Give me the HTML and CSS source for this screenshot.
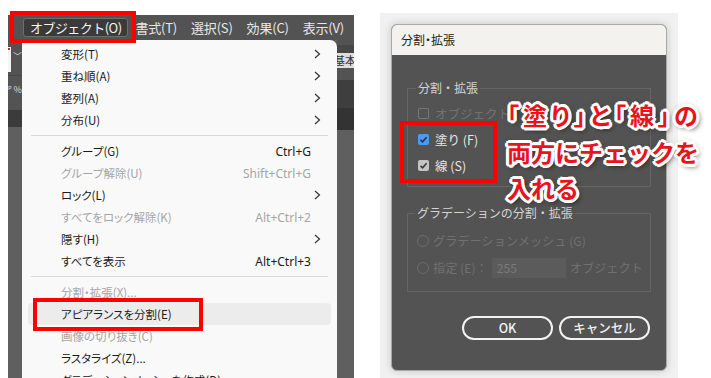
FILE: index.html
```html
<!DOCTYPE html>
<html lang="ja">
<head>
<meta charset="utf-8">
<title>分割・拡張</title>
<link rel="stylesheet" href="styles.css">
</head>
<body>
<div class="page">
  <div class="shot">
    <div class="menubar">
      <div class="mb-item active">オブジェクト(O)</div>
      <div class="mb-item">書式(T)</div>
      <div class="mb-item">選択(S)</div>
      <div class="mb-item">効果(C)</div>
      <div class="mb-item">表示(V)</div>
    </div>
    <div class="below">
      <div class="lstrip">
        <div class="ls-a"></div>
        <div class="ls-b"><span class="ls-white"><i class="ls-dot"></i></span><span class="ls-chev">﹀</span></div>
        <div class="ls-c">ᴾ %</div>
        <div class="ls-d"></div>
        <div class="ls-e"></div>
      </div>
      <div class="menu">
        <div class="row"><span>変形(T)</span><span class="key"></span><svg class="arr" viewBox="0 0 10 10"><path d="M4 1 L8.5 5 L4 9"/></svg></div>
        <div class="row"><span>重ね順(A)</span><span class="key"></span><svg class="arr" viewBox="0 0 10 10"><path d="M4 1 L8.5 5 L4 9"/></svg></div>
        <div class="row"><span>整列(A)</span><span class="key"></span><svg class="arr" viewBox="0 0 10 10"><path d="M4 1 L8.5 5 L4 9"/></svg></div>
        <div class="row"><span>分布(U)</span><span class="key"></span><svg class="arr" viewBox="0 0 10 10"><path d="M4 1 L8.5 5 L4 9"/></svg></div>
        <div class="sep"></div>
        <div class="row"><span>グループ(G)</span><span class="key">Ctrl+G</span><span></span></div>
        <div class="row dis"><span>グループ解除(U)</span><span class="key">Shift+Ctrl+G</span><span></span></div>
        <div class="row"><span>ロック(L)</span><span class="key"></span><svg class="arr" viewBox="0 0 10 10"><path d="M4 1 L8.5 5 L4 9"/></svg></div>
        <div class="row dis"><span>すべてをロック解除(K)</span><span class="key">Alt+Ctrl+2</span><span></span></div>
        <div class="row"><span>隠す(H)</span><span class="key"></span><svg class="arr" viewBox="0 0 10 10"><path d="M4 1 L8.5 5 L4 9"/></svg></div>
        <div class="row"><span>すべてを表示</span><span class="key">Alt+Ctrl+3</span><span></span></div>
        <div class="sep"></div>
        <div class="row dis"><span>分割・拡張(X)...</span><span class="key"></span><span></span></div>
        <div class="row hl"><span>アピアランスを分割(E)</span><span class="key"></span><span></span></div>
        <div class="row dis"><span>画像の切り抜き(C)</span><span class="key"></span><span></span></div>
        <div class="row"><span>ラスタライズ(Z)...</span><span class="key"></span><span></span></div>
        <div class="row"><span>グラデーションメッシュを作成(D)...</span><span class="key"></span><span></span></div>
      </div>
      <div class="rstrip">
        <div class="rs-a"></div>
        <div class="rs-b"></div>
        <div class="rs-c"><span>基本</span></div>
        <div class="rs-d"></div>
        <div class="rs-e"></div>
        <div class="rs-f"></div>
        <div class="rs-g"></div>
      </div>
    </div>
  </div>

  <div class="dlg-wrap">
    <div class="dlg">
      <div class="dlg-title">分割・拡張</div>
      <div class="dlg-body">
        <fieldset class="grp g1">
          <legend>分割・拡張</legend>
          <div class="opt dis"><span class="cb cb-off"></span><span>オブジェクト</span></div>
          <div class="opt"><svg class="cb" viewBox="0 0 11 11"><rect x="0" y="0" width="11" height="11" rx="2" fill="#4a9bef"/><path d="M2.5 5.8 L4.6 7.8 L8.6 3.2" fill="none" stroke="#2c3440" stroke-width="1.6"/></svg><span>塗り (F)</span></div>
          <div class="opt"><svg class="cb" viewBox="0 0 11 11"><rect x="0" y="0" width="11" height="11" rx="2" fill="#c4c4c4"/><path d="M2.5 5.8 L4.6 7.8 L8.6 3.2" fill="none" stroke="#3a3a3a" stroke-width="1.6"/></svg><span>線 (S)</span></div>
        </fieldset>
        <fieldset class="grp g2">
          <legend>グラデーションの分割・拡張</legend>
          <div class="opt2 dis"><span class="radio"></span><span>グラデーションメッシュ (G)</span></div>
          <div class="opt2 dis"><span class="radio"></span><span>指定 (E)：</span><span class="inp">255</span><span>オブジェクト</span></div>
        </fieldset>
        <div class="btns">
          <div class="btn">OK</div>
          <div class="btn">キャンセル</div>
        </div>
      </div>
    </div>
  </div>

  <div class="rbox rb1"></div>
  <div class="rbox rb2"></div>
  <div class="rbox rb3"></div>

  <div class="note">
    <div class="l1">「塗り」と「線」の</div>
    <div>両方にチェックを</div>
    <div>入れる</div>
  </div>
</div>
</body>
</html>
```

FILE: styles.css
```css
* { box-sizing: border-box; }
body {
  margin: 0;
  background: #fff;
  font-family: "Noto Sans CJK JP", "Noto Sans", sans-serif;
}
.page {
  position: relative;
  width: 711px;
  height: 378px;
  display: flex;
  align-items: flex-start;
  overflow: hidden;
}

/* left screenshot */
.shot {
  margin: 15px 0 0 8px;
  width: 346px;
  height: 363px;
  display: flex;
  flex-direction: column;
  background: #5f5f5f;
}
.menubar {
  height: 25px;
  flex: none;
  background: #535353;
  display: flex;
  align-items: center;
  padding-left: 15px;
}
.mb-item {
  font-size: 13px;
  line-height: 18px;
  height: 18px;
  color: #e8e8e8;
  padding: 0 7px;
  white-space: nowrap;
  letter-spacing: -0.2px;
}
.mb-item.active {
  background: #3a3a3a;
  border: 1px solid #6e6e6e;
  border-radius: 3px;
  padding: 0 6px;
  height: 19px;
  line-height: 17px;
  color: #f4f4f4;
  letter-spacing: -0.55px;
}
.below {
  flex: 1;
  display: flex;
  min-height: 0;
}
.lstrip {
  width: 14px;
  display: flex;
  flex-direction: column;
  overflow: hidden;
}
.ls-a { height: 5px; background: #535353; }
.ls-b {
  height: 30px;
  background: #535353;
  display: flex;
  align-items: flex-start;
}
.ls-white {
  position: relative;
  width: 4px;
  height: 25px;
  margin-top: 2px;
  background: #f4f4f4;
}
.ls-dot {
  position: absolute;
  left: 0;
  top: 1px;
  width: 2px;
  height: 2px;
  background: #e02020;
}
.ls-chev {
  font-size: 9px;
  color: #ddd;
  margin: 7px 0 0 2px;
  line-height: 10px;
}
.ls-c {
  height: 35px;
  background: #535353;
  border-top: 1px solid #474747;
  font-size: 9px;
  color: #ddd;
  line-height: 28px;
  white-space: nowrap;
}
.ls-d { height: 17px; background: #3b3b3b; }
.ls-e { flex: 1; background: #5f5f5f; }

.menu {
  width: 315px;
  background: #f9f9f9;
  border-radius: 0 7px 0 0;
  padding-top: 3px;
  overflow: hidden;
}
.row {
  display: grid;
  grid-template-columns: 1fr auto 10px;
  align-items: center;
  height: 22px;
  margin: 0 6px;
  padding: 0 10px 0 33px;
  font-size: 11.5px;
  color: #1b1b1b;
  border-radius: 4px;
  white-space: nowrap;
  font-feature-settings: "palt";
}
.row.dis { color: #a5a5a5; }
.row.hl { background: #ececec; }
.key {
  font-size: 12px;
  text-align: right;
  font-family: "Noto Sans", sans-serif;
}
.arr { width: 10px; height: 10px; }
.arr path { fill: none; stroke: #333; stroke-width: 1.2; }
.sep {
  height: 1px;
  background: #d9d9d9;
  margin: 4px 9px;
}

.rstrip {
  width: 17px;
  display: flex;
  flex-direction: column;
  overflow: hidden;
}
.rs-a { height: 5px; background: #535353; }
.rs-b { height: 8px; background: #474747; }
.rs-c {
  height: 15px;
  background: #dedede;
  font-size: 11px;
  line-height: 15px;
  color: #333;
  white-space: nowrap;
  overflow: hidden;
}
.rs-c span { margin-left: -3px; }
.rs-d { height: 12px; background: #535353; }
.rs-e { height: 28px; background: #3e3e3e; }
.rs-f { height: 22px; background: #333; }
.rs-g { flex: 1; background: #5f5f5f; }

/* dialog */
.dlg-wrap {
  margin: 13px 0 0 26px;
  width: 298px;
  height: 365px;
  background: #f1f1f1;
  padding: 11px 11px 0;
}
.dlg {
  width: 276px;
  height: 347px;
  border-radius: 6px;
  background: #535353;
  overflow: hidden;
  border: 1px solid #a9a9a9;
  box-shadow: 0 0 9px rgba(0, 0, 0, 0.18);
  display: flex;
  flex-direction: column;
}
.dlg-title {
  height: 30px;
  flex: none;
  background: #f3f2ef;
  font-size: 12px;
  line-height: 30px;
  padding-left: 9px;
  color: #1c1c1c;
  font-feature-settings: "palt";
}
.dlg-body { padding: 25px 15px 0 15px; }
.grp {
  border: 1px solid #656565;
  margin: 0;
  padding: 4px 0 8px 10px;
  min-width: 0;
}
.grp legend {
  font-size: 12px;
  line-height: 16px;
  padding: 0 2px;
  margin-left: -2px;
  color: #d4d4d4;
}
.g2 {
  margin-top: 18px;
  padding: 6px 0 10px 9px;
}
.opt {
  display: flex;
  align-items: center;
  height: 26px;
  gap: 6px;
  font-size: 12.5px;
  color: #e6e6e6;
}
.opt.dis { color: #727272; }
.cb { width: 11px; height: 11px; flex: none; }
.cb-off {
  display: block;
  border: 1px solid #767676;
  border-radius: 1px;
}
.opt2 {
  display: flex;
  align-items: center;
  height: 27px;
  gap: 4px;
  font-size: 12.2px;
  white-space: nowrap;
}
.opt2.dis { color: #707070; }
.radio {
  width: 12px;
  height: 12px;
  border: 1.5px solid #6c6c6c;
  border-radius: 50%;
  flex: none;
}
.inp {
  width: 74px;
  height: 20px;
  background: #5b5b5b;
  color: #797979;
  padding-left: 5px;
  line-height: 20px;
}
.btns {
  display: flex;
  justify-content: flex-end;
  gap: 6px;
  margin-top: 24px;
  padding-right: 1px;
}
.btn {
  width: 91px;
  height: 24px;
  border: 2px solid #f2f2f2;
  border-radius: 12px;
  color: #f2f2f2;
  font-size: 12.5px;
  font-weight: 500;
  line-height: 20px;
  text-align: center;
}

/* overlays */
.rbox {
  position: absolute;
  border: 4px solid #ff0000;
}
.rb1 { left: 10px; top: 11px; width: 126px; height: 32px; }
.rb2 { left: 33px; top: 298px; width: 170px; height: 33px; }
.rb3 { left: 400px; top: 121px; width: 97px; height: 62px; }

.note {
  position: absolute;
  left: 507px;
  top: 97px;
  font-size: 24px;
  line-height: 36.5px;
  font-weight: 700;
  color: #e8131b;
  white-space: nowrap;
  text-shadow:
    2px 0 #fff, -2px 0 #fff, 0 2px #fff, 0 -2px #fff,
    2px 2px #fff, -2px -2px #fff, 2px -2px #fff, -2px 2px #fff,
    3px 0 #fff, -3px 0 #fff, 0 3px #fff, 0 -3px #fff,
    3px 1px #fff, -3px 1px #fff, 1px 3px #fff, 1px -3px #fff,
    3px 3px 5px rgba(0, 0, 0, 0.6), 0 0 7px rgba(0, 0, 0, 0.4);
}
.l1 {
  font-feature-settings: "palt";
  letter-spacing: 4px;
}
```
